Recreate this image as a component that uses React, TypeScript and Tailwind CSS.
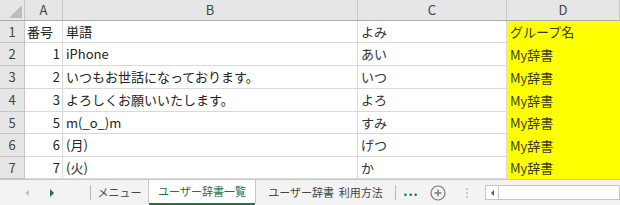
import React from "react";

const FONT = {
  fontFamily: '"Noto Sans CJK JP", "Noto Sans", sans-serif',
};

type Row = { a: string; b: string; c: string; d: string; h: string };

const ROWS: Row[] = [
  { a: "番号", b: "単語", c: "よみ", d: "グループ名", h: "h-[22px]" },
  { a: "1", b: "iPhone", c: "あい", d: "My辞書", h: "h-[23px]" },
  { a: "2", b: "いつもお世話になっております。", c: "いつ", d: "My辞書", h: "h-[23px]" },
  { a: "3", b: "よろしくお願いいたします。", c: "よろ", d: "My辞書", h: "h-[23px]" },
  { a: "5", b: "m(_o_)m", c: "すみ", d: "My辞書", h: "h-[22px]" },
  { a: "6", b: "(月)", c: "げつ", d: "My辞書", h: "h-[23px]" },
  { a: "7", b: "(火)", c: "か", d: "My辞書", h: "h-[22px]" },
];

function HeaderRow() {
  const cols = [
    { label: "A", w: "w-[38px]" },
    { label: "B", w: "w-[295px]" },
    { label: "C", w: "w-[149px]" },
    { label: "D", w: "flex-1" },
  ];
  return (
    <div className="flex h-[21px] border-b border-[#ababab] bg-[#e6e6e6]">
      <div className="flex w-[25px] shrink-0 items-end justify-end border-r border-[#c6c6c6] pb-[2px] pr-[2px]">
        <svg width="13" height="13" viewBox="0 0 13 13">
          <path d="M13 0V13H0Z" fill="#bcbcbc" />
        </svg>
      </div>
      {cols.map((c) => (
        <div
          key={c.label}
          className={`${c.w} shrink-0 border-r border-[#c6c6c6] flex items-center justify-center text-[13px] text-[#444]`}
        >
          {c.label}
        </div>
      ))}
    </div>
  );
}

function DataRow({ row, n }: { row: Row; n: number }) {
  const numeric = /^\d+$/.test(row.a);
  return (
    <div className={`flex ${row.h} text-[13px] text-[#222]`}>
      <div className="w-[25px] shrink-0 border-r border-b border-[#c6c6c6] bg-[#e6e6e6] flex items-center justify-center text-[#444]">
        {n}
      </div>
      <div
        className={`w-[38px] shrink-0 border-r border-b border-[#d9d9d9] flex items-center px-[2px] ${
          numeric ? "justify-end" : "justify-start"
        }`}
      >
        {row.a}
      </div>
      <div className="w-[295px] shrink-0 border-r border-b border-[#d9d9d9] flex items-center px-[3px]">
        {row.b}
      </div>
      <div className="w-[149px] shrink-0 border-r border-b border-[#d9d9d9] flex items-center px-[3px] text-[#333]">
        {row.c}
      </div>
      <div className="flex-1 bg-[#ffff00] flex items-center px-[3px] text-[#3a3a1a]">
        {row.d}
      </div>
    </div>
  );
}

function TabBar() {
  return (
    <div className="flex h-[26px] items-stretch border-t border-[#c8c8c8] bg-[#f3f3f3] text-[11px] text-[#444]">
      <div className="flex w-[90px] shrink-0 items-center">
        <span className="ml-[25px] h-0 w-0 border-y-[3px] border-r-[4px] border-y-transparent border-r-[#c4c4c4]" />
        <span className="ml-[21px] h-0 w-0 border-y-[4px] border-l-[4px] border-y-transparent border-l-[#217346]" />
      </div>
      <div className="flex items-center">
        <div className="h-[15px] w-px bg-[#b8b8b8]" />
      </div>
      <div className="flex w-[57px] shrink-0 items-center justify-center">メニュー</div>
      <div className="relative mb-[2px] flex w-[108px] shrink-0 items-center justify-center border-x border-[#c8c8c8] bg-white text-[#217346]">
        ユーザー辞書一覧
        <div className="absolute bottom-[-2px] left-0 right-0 h-[2px] bg-[#217346]" />
      </div>
      <div className="flex w-[139px] shrink-0 items-center justify-center">ユーザー辞書&nbsp;&nbsp;利用方法</div>
      <div className="flex items-center">
        <div className="h-[15px] w-px bg-[#b8b8b8]" />
      </div>
      <div className="flex w-[30px] shrink-0 items-center justify-center text-[13px] font-bold text-[#217346]">
        <span className="mt-[-4px] tracking-[1px]">...</span>
      </div>
      <div className="flex w-[24px] shrink-0 items-center justify-center">
        <svg width="16" height="16" viewBox="0 0 16 16">
          <circle cx="8" cy="8" r="7" fill="none" stroke="#777" strokeWidth="1.2" />
          <path d="M8 4.5v7M4.5 8h7" stroke="#777" strokeWidth="1.4" />
        </svg>
      </div>
      <div className="flex w-[34px] shrink-0 flex-col items-center justify-center gap-[2px]">
        <span className="h-[2px] w-[2px] bg-[#c4c4c4]" />
        <span className="h-[2px] w-[2px] bg-[#c4c4c4]" />
        <span className="h-[2px] w-[2px] bg-[#c4c4c4]" />
      </div>
      <div className="flex flex-1 items-center pl-[1px]">
        <div className="flex h-[15px] flex-1 border border-[#c6c6c6] bg-white">
          <div className="flex w-[13px] items-center justify-center border-r border-[#c6c6c6]">
            <span className="h-0 w-0 border-y-[3px] border-r-[3px] border-y-transparent border-r-[#555]" />
          </div>
        </div>
      </div>
    </div>
  );
}

export default function App() {
  return (
    <div className="h-[205px] w-[620px] overflow-hidden bg-white" style={FONT}>
      <HeaderRow />
      {ROWS.map((r, i) => (
        <DataRow key={i} row={r} n={i + 1} />
      ))}
      <TabBar />
    </div>
  );
}
